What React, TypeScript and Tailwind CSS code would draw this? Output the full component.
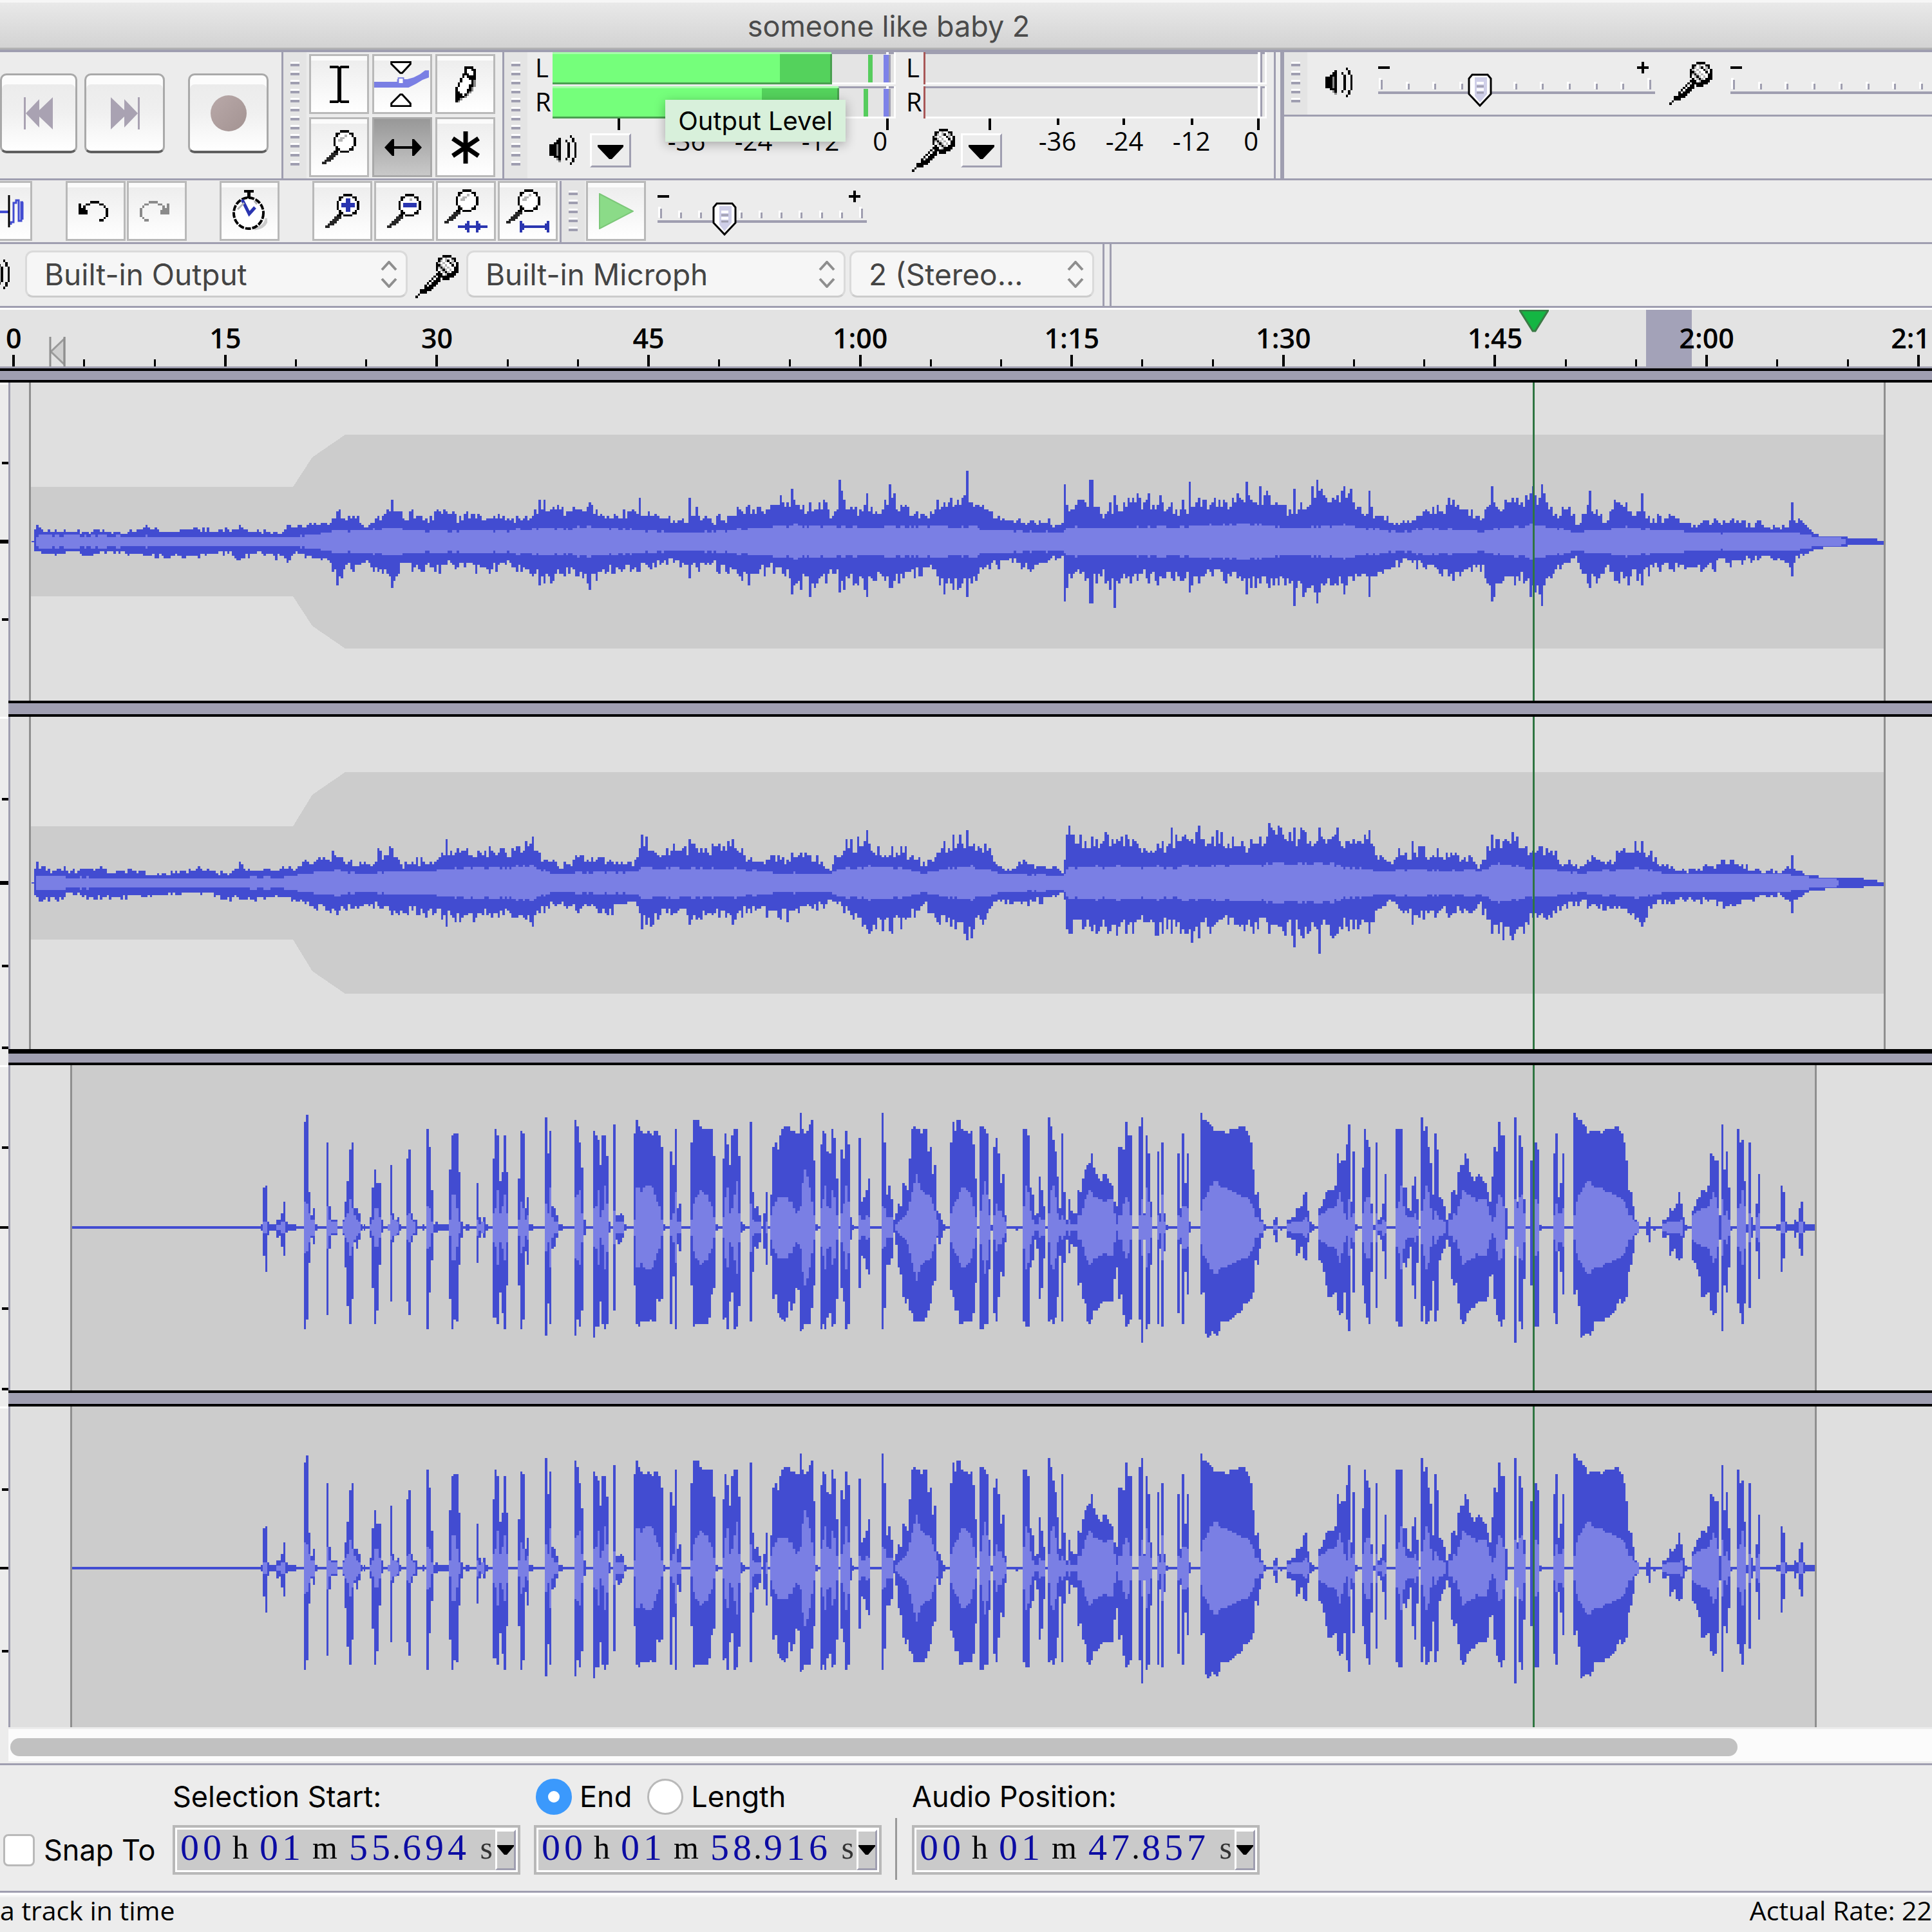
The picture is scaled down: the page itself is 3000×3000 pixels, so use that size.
import React from "react";

/* ---------- pixel icons ---------- */

const INK: Record<string, string> = {
  X: "#000000",
  w: "#ffffff",
  g: "#b5b5b5",
  b: "#2a35b0",
  k: "#262626",
  m: "#8a8a8a",
};

function PixelIcon({ rows, label }: { rows: string[]; label?: string }) {
  const cols = Math.max(...rows.map((r) => r.length));
  const paths: Record<string, string> = {};
  rows.forEach((row, y) => {
    for (let x = 0; x < row.length; x++) {
      const c = row[x];
      if (INK[c]) paths[c] = (paths[c] || "") + `M${x} ${y}h1v1h-1z`;
    }
  });
  return (
    <svg
      width={Math.round(cols * 3.53)}
      height={Math.round(rows.length * 3.53)}
      viewBox={`0 0 ${cols} ${rows.length}`}
      shapeRendering="crispEdges"
      aria-label={label}
      aria-hidden={label ? undefined : true}
      className="shrink-0"
    >
      {Object.entries(paths).map(([c, d]) => (
        <path key={c} d={d} fill={INK[c]} />
      ))}
    </svg>
  );
}

const LENS_HANDLE = [
  "......XXwwwwXX.",
  ".....XX.XXXX...",
  "....kkk........",
  "...kkk.........",
  "..kkk..........",
  ".kkk...........",
  "kk.............",
];
const LENS = [
  "........XXXX...",
  "......XXwwwwXX.",
  "......XwwwgwwX.",
  ".....XwwggwwwwX",
  ".....XwggwwwwwX",
  ".....XwwwwwwwwX",
  ".....XwwwwwwwwX",
  "......XwwwwwwX.",
  ...LENS_HANDLE,
];
const LENS_PLUS = [
  "........XXXX...",
  "......XXwwwwXX.",
  "......XwwbbwwX.",
  ".....XwwwbbwwwX",
  ".....XwbbbbbbwX",
  ".....XwbbbbbbwX",
  ".....XwwwbbwwwX",
  "......XwwbbwwX.",
  ...LENS_HANDLE,
];
const LENS_MINUS = [
  "........XXXX...",
  "......XXwwwwXX.",
  "......XwwwgwwX.",
  ".....XwwwwwwwwX",
  ".....XwbbbbbbwX",
  ".....XwbbbbbbwX",
  ".....XwwwwwwwwX",
  "......XwwwwwwX.",
  ...LENS_HANDLE,
];
const FIT_SELECTION = [
  ...LENS.slice(0, 14),
  "kk........b...b....",
  ".........bb...bb...",
  "......bbbbbbbbbbbbb",
  ".........bb...bb...",
  "..........b...b....",
];
const FIT_PROJECT = [
  ...LENS.slice(0, 14),
  "kk....b...........b",
  "......bb.........bb",
  "......bbbbbbbbbbbbb",
  "......bb.........bb",
  "......b...........b",
];
const PENCIL = [
  "....XXXX.",
  "....XwwXX",
  "....XwwwX",
  "...XXXwwX",
  "...XwXXXX",
  "..XwwwXXX",
  "..XwwwwXm",
  ".XwwwwwXm",
  ".XwwwwXXm",
  "XwwwwwXm.",
  "XwwwwXXm.",
  "XXwwwXm..",
  "XXXwXm...",
  "XXXXm....",
  "XXm......",
  "Xm.......",
];
const MIC = [
  "............XXXX...",
  "..........XXwgwwXX.",
  "..........XgwgXwgX.",
  ".........XgwgwwXgwX",
  ".........XXgwgwwXwX",
  ".........XgXgwgwwXX",
  ".........XwgXgwgwXX",
  "..........XwgXgwXXX",
  ".........XXXwgXXXX.",
  "........XwXXXXXXX..",
  ".......XwXX.XXX....",
  "......XwXXX........",
  ".....XwXXX.........",
  "....XwXXX..........",
  "....XXXX...........",
  "..XXXXX............",
  "..XXX..............",
  ".X.................",
  "X..................",
];
const SPEAKER = [
  ".........X..",
  "....X.....X.",
  "...XX..X..X.",
  "..XXX...X..X",
  "XXXmX...X..X",
  "XXXmX...X..X",
  "XXXmX...X..X",
  "XXXmX...X..X",
  "XXXmX...X..X",
  "..XXX...X..X",
  "...mX..X..X.",
  "....m.....X.",
  ".........X..",
];
const UNDO_GLYPH = [
  ".....XXXX....",
  "X..XX....XX..",
  "X.X........X.",
  "XXX.........X",
  "XXXX........X",
  "XXXX........X",
  "............X",
  "...........X.",
  ".........XX..",
];
const UNDO = UNDO_GLYPH.map((r) => r + "..");
const REDO = UNDO_GLYPH.map((r) => r.split("").reverse().join("").replace(/X/g, "m") + "..");

/* ---------- small drawn icons ---------- */

function CaretDown() {
  return (
    <svg width="40" height="22" viewBox="0 0 40 22" aria-hidden="true">
      <path d="M0 0H40V3L22 22H18L0 3Z" fill="#000" />
    </svg>
  );
}

function TransportIcon({ kind }: { kind: "prev" | "next" | "record" }) {
  if (kind === "record")
    return (
      <svg width="56" height="56" viewBox="0 0 56 56" aria-hidden="true">
        <defs>
          <linearGradient id="rec" x1="0" y1="0" x2="1" y2="1">
            <stop offset="0" stopColor="#b9a9a9" />
            <stop offset="1" stopColor="#a39392" />
          </linearGradient>
        </defs>
        <circle cx="28" cy="28" r="28" fill="url(#rec)" />
      </svg>
    );
  return (
    <svg width="46" height="50" viewBox="0 0 46 50" aria-hidden="true">
      <path
        d={
          kind === "prev"
            ? "M0 0H3V50H0Z M3 25 24 3V20L45 0V50L24 30V47Z"
            : "M46 0H43V50H46Z M43 25 22 3V20L1 0V50L22 30V47Z"
        }
        fill="#a9a2b2"
      />
    </svg>
  );
}

function IBeam() {
  return (
    <svg width="30" height="58" viewBox="0 0 30 58" aria-hidden="true">
      <path d="M0 0H13L15 2 17 0H30V4H18V54H30V58H17L15 56 13 58H0V54H12V4H0Z" fill="#000" />
    </svg>
  );
}

function EnvelopeIcon() {
  return (
    <svg width="88" height="76" viewBox="0 0 88 76" aria-hidden="true">
      <path d="M0 34H36V30H52L62 27 72 22 80 16H86V27L76 31 66 37 54 43H0Z" fill="#7a7fe4" />
      <path d="M27 3H57V6L44 20H41L27 6Z" fill="#fff" stroke="#000" strokeWidth="3" />
      <path d="M27 72H57V68L44 54H41L27 68Z" fill="#fff" stroke="#000" strokeWidth="3" />
      <rect x="38" y="28" width="8" height="9" fill="#fff" stroke="#7a7fe4" strokeWidth="2" />
    </svg>
  );
}

function TimeShiftIcon() {
  return (
    <svg width="60" height="26" viewBox="-2 0 60 26" aria-hidden="true">
      <path d="M0 13 12 0H15V11H43V0H46L58 13 46 26H43V15H15V26H12Z" fill="#000" />
    </svg>
  );
}

function MultiIcon() {
  return (
    <svg width="46" height="50" viewBox="0 0 46 50" aria-hidden="true">
      <path d="M23 0V50M3 11 43 38M43 11 3 38" stroke="#000" strokeWidth="7" fill="none" />
    </svg>
  );
}

function WaveIcon() {
  return (
    <svg width="38" height="50" viewBox="0 0 38 50" aria-hidden="true">
      <path d="M0 26H13" stroke="#424cd1" strokeWidth="4" />
      <path d="M17 46V42H21V12H25V8H29V40H33V11H36" stroke="#424cd1" strokeWidth="3" fill="none" />
      <path d="M14 0V50" stroke="#000" strokeWidth="3" />
      <path d="M35 11V38" stroke="#424cd1" strokeWidth="3" />
    </svg>
  );
}

function StopwatchIcon() {
  return (
    <svg width="54" height="66" viewBox="0 0 54 66" aria-hidden="true">
      <path d="M34 60Q52 58 53 44" stroke="#cccccc" strokeWidth="5" fill="none" />
      <ellipse cx="25" cy="36" rx="23" ry="24" fill="#fff" stroke="#000" strokeWidth="4" strokeDasharray="9 2" />
      <path d="M18 0H33V4H28V13H23V4H18Z" fill="#000" />
      <path d="M15 15 26 37 35 27" stroke="#2a35b0" strokeWidth="5" fill="none" />
      <path d="M8 30 18 20M34 17 38 22" stroke="#b5b5b5" strokeWidth="3" />
    </svg>
  );
}

function PlayIcon() {
  return (
    <svg width="54" height="56" viewBox="0 0 54 56" aria-hidden="true">
      <path d="M1 1 53 28 1 55Z" fill="#8bdb88" stroke="#7cc779" strokeWidth="2" />
    </svg>
  );
}

/* ---------- toolbar parts ---------- */

function Gripper({ bars }: { bars: number }) {
  return (
    <div className="flex w-[36px] shrink-0 flex-col items-center gap-[7px] self-stretch bg-[#e4e4e4] pt-[15px]">
      {Array.from({ length: bars }, (_, i) => (
        <div key={i} className="h-[7px] w-[14px] border-t-[3px] border-white bg-[#9f9eb0]" />
      ))}
    </div>
  );
}

function ToolButton({
  label,
  pressed,
  narrow,
  children,
}: {
  label: string;
  pressed?: boolean;
  narrow?: boolean;
  children: React.ReactNode;
}) {
  const tone = pressed
    ? "border-[#a9a9a9] bg-linear-to-b from-[#989898] to-[#c9c9c9]"
    : "border-[#b9b9b9] bg-linear-to-b from-[#ececec] to-white shadow-[inset_0_7px_0_#fbfbfb]";
  return (
    <button
      type="button"
      aria-label={label}
      aria-pressed={pressed}
      className={`flex h-[93px] shrink-0 items-center justify-center overflow-hidden border-[3px] ${
        narrow ? "w-[50px] justify-start border-l-0" : "w-[93px]"
      } ${tone}`}
    >
      {children}
    </button>
  );
}

function TransportButton({
  label,
  flush,
  children,
}: {
  label: string;
  flush?: boolean;
  children: React.ReactNode;
}) {
  return (
    <button
      type="button"
      aria-label={label}
      className={`flex h-[124px] shrink-0 items-center justify-center rounded-[10px] border-[3px] border-b-[4px] border-[#a9a9a9] border-b-[#5f5f5f] bg-linear-to-b from-[#eaeaea] via-[#f0f0f0] to-white shadow-[inset_0_14px_0_#fcfcfc] ${
        flush ? "w-[120px]" : "w-[125px]"
      }`}
    >
      {children}
    </button>
  );
}

function Slider({ label, width, value }: { label: string; width: number; value: number }) {
  const first = 5;
  const last = width - 8;
  const thumb = first + (last - first) * value;
  return (
    <div className="relative shrink-0">
      <svg width={width} height="72" viewBox={`0 0 ${width} 72`} aria-hidden="true" shapeRendering="crispEdges">
        <path d={`M0 9H18M${width - 28} 9H${width - 10}M${width - 19} 0V18`} stroke="#000" strokeWidth="4" />
        {Array.from({ length: 11 }, (_, i) => {
          const x = Math.round(first + ((last - first) * i) / 10);
          const top = i === 0 || i === 10 ? 28 : 34;
          return (
            <g key={i}>
              <rect x={x - 4} y={top - 3} width="4" height={45 - top} fill="#fff" />
              <rect x={x - 1} y={top} width="3" height={43 - top} fill="#9f9eb0" />
            </g>
          );
        })}
        <rect x="0" y="46" width={width} height="4" fill="#9f9eb0" />
        <g transform={`translate(${Math.round(thumb - 20)} 18)`} shapeRendering="auto">
          <path d="M7 2H31L36 8V32L19 50 2 32V8Z" fill="#fff" stroke="#000" strokeWidth="3" />
          <path d="M11 6H30V32L19 45 11 35Z" fill="#cfcfe8" />
          <path d="M14 15H25M14 25H25" stroke="#fff" strokeWidth="4" />
          <path d="M14 20H25M14 30H25" stroke="#9f9eb0" strokeWidth="3" />
        </g>
      </svg>
      <input
        type="range"
        aria-label={label}
        min={0}
        max={100}
        defaultValue={Math.round(value * 100)}
        className="absolute inset-0 h-full w-full cursor-pointer opacity-0"
      />
    </div>
  );
}

type Level = { light: number; dark: number; peak: number };

function MeterBar({ name, level }: { name: string; level?: Level }) {
  return (
    <div className="flex h-[50px]">
      <span className="w-[27px] text-[40px] leading-[48px]">{name}</span>
      <svg width="533" height="50" viewBox="0 0 533 50" shapeRendering="crispEdges" role="img" aria-label={`Channel ${name}`}>
        <rect width="533" height="50" fill="#fdfdfd" />
        <rect width="530" height="47" fill="#e4e4e4" />
        <rect width="530" height="3" fill="#9f9eb0" />
        {level ? (
          <>
            <rect width={level.dark} height="50" fill="#54d25c" />
            <rect width={level.light} height="50" fill="#75ff7b" />
            <rect width={level.dark} height="3" fill="#a6ffaa" />
            <rect y="47" width={level.dark} height="3" fill="#4a9f50" />
            <rect x={level.dark - 2} y="3" width="3" height="47" fill="#4a9f50" />
            <rect x={level.peak} y="4" width="7" height="43" fill="#56cc5d" />
            <rect x="514" y="4" width="8" height="43" fill="#7d82e8" />
            <rect x="522" y="4" width="3" height="43" fill="#9f9eb0" />
            <rect x="518" width="4" height="4" fill="#fff" />
          </>
        ) : (
          <>
            <rect x="519" width="4" height="50" fill="#fff" />
            <rect x="523" y="3" width="3" height="44" fill="#9f9eb0" />
            <rect width="3" height="50" fill="#a85757" />
          </>
        )}
      </svg>
    </div>
  );
}

function Meter({ name, icon, left, right }: { name: string; icon: string[]; left?: Level; right?: Level }) {
  return (
    <div className="flex w-[560px] shrink-0 flex-col">
      <MeterBar name="L" level={left} />
      <div className="h-[3px]" />
      <MeterBar name="R" level={right} />
      <svg width="533" height="18" viewBox="0 0 533 18" className="ml-[27px]" aria-hidden="true" shapeRendering="crispEdges">
        <path d="M103 0V18M520 0V18M209 0V10M311 0V10M417 0V10" stroke="#000" strokeWidth="4" />
      </svg>
      <div className="flex">
        <div className="flex h-[62px] w-[85px] items-center justify-center">
          <PixelIcon rows={icon} />
        </div>
        <button
          type="button"
          aria-label={`${name} options`}
          className="mt-[5px] flex h-[53px] w-[64px] items-center justify-center border-[3px] border-t-white border-r-[#9f9eb0] border-b-[#9f9eb0] border-l-white bg-[#ececec] pt-1"
        >
          <CaretDown />
        </button>
        <div className="ml-[34px] flex text-[40px] leading-[34px]">
          <span className="w-[104px] text-center">-36</span>
          <span className="w-[104px] text-center">-24</span>
          <span className="w-[104px] text-center">-12</span>
          <span className="w-[52px] text-right">0</span>
        </div>
      </div>
    </div>
  );
}

function DeviceSelect({ label, value, size }: { label: string; value: string; size: string }) {
  return (
    <div className={`relative shrink-0 ${size}`}>
      <select
        aria-label={label}
        defaultValue={value}
        className="h-[73px] w-full appearance-none rounded-[12px] border-[3px] border-[#dadada] border-b-[#cccccc] bg-[#f6f6f6] pl-[27px] font-[Inter,sans-serif] text-[46px] leading-[60px] text-[#444444]"
      >
        <option>{value}</option>
      </select>
      <svg width="26" height="42" viewBox="0 0 26 42" className="pointer-events-none absolute top-[16px] right-[16px]" aria-hidden="true">
        <path d="M2 14 13 2 24 14M2 28 13 40 24 28" stroke="#8e8e8e" strokeWidth="4" fill="none" />
      </svg>
    </div>
  );
}

/* ---------- waveforms ---------- */

/* Music envelopes: pairs of position and height on the timeline grid. */
const MUSIC_SCALE_X = 1.0453;
const MUSIC_SCALE_Y = 1.96;

const MUSIC_L = {
  up: [52,12,57,62,70,38,100,38,200,30,235,50,260,35,310,45,350,32,388,48,410,32,460,32,466,55,500,50,530,65,550,90,575,105,590,55,610,75,635,120,655,90,680,90,700,70,712,105,740,80,790,85,850,75,872,115,905,115,955,115,985,90,1010,95,1040,115,1060,90,1117,70,1120,115,1150,75,1185,90,1230,115,1283,145,1310,110,1335,120,1350,85,1363,150,1390,110,1405,140,1430,110,1444,150,1480,95,1500,85,1525,130,1545,150,1567,165,1572,140,1600,110,1640,70,1660,65,1700,65,1726,55,1728,160,1735,125,1769,150,1790,100,1808,120,1850,150,1890,115,1930,130,1970,125,2000,135,2020,160,2060,150,2090,120,2118,110,2136,180,2160,145,2190,160,2210,110,2240,90,2265,60,2290,75,2320,110,2365,130,2400,75,2415,140,2440,110,2455,145,2480,160,2500,160,2520,100,2550,100,2560,60,2578,130,2600,75,2625,140,2650,110,2680,85,2720,75,2740,55,2815,75,2860,55,2900,50,2906,90,2930,45,2950,15,2990,13,3000,9,3044,9,3046,3,3057,3],
  down: [52,8,57,45,120,32,140,55,170,35,245,50,300,52,370,35,388,60,410,35,466,60,480,42,530,62,547,110,560,100,600,80,635,125,650,80,700,95,760,75,790,105,830,75,873,125,920,110,957,125,1000,95,1050,85,1090,60,1120,100,1150,80,1215,125,1260,85,1283,150,1330,140,1350,100,1365,150,1405,155,1430,120,1445,135,1490,110,1500,80,1530,145,1567,165,1590,100,1640,60,1670,100,1700,65,1726,50,1728,150,1750,100,1770,160,1785,115,1808,150,1830,130,1890,125,1935,130,1960,105,2030,150,2060,130,2098,160,2135,160,2180,150,2220,130,2260,90,2280,55,2320,95,2360,125,2400,80,2420,160,2440,120,2480,150,2498,185,2520,110,2555,60,2582,130,2610,90,2625,140,2660,115,2700,80,2760,85,2830,65,2870,55,2905,85,2915,50,2950,18,2990,13,3000,9,3044,9,3046,5,3057,5],
  rms: [57,20,460,14,500,20,550,35,630,42,700,32,800,35,955,45,1050,35,1100,28,1180,35,1283,50,1400,45,1567,50,1600,35,1726,28,1728,45,1800,42,2030,55,2100,42,2180,52,2270,28,2320,42,2400,32,2490,52,2560,30,2640,45,2750,28,2900,28,2930,22,2945,12,2994,10,2996,0,3057,0],
  spikes: [1363,186,151,1444,172,140,1567,214,165,1728,172,180,1769,186,186,1809,138,200,1931,180,155,2020,180,160,2098,160,192,2135,186,186,2220,152,165,2419,166,180,2500,172,192,2578,150,138,2662,145,130,2906,117,102,1283,158,158,635,124,138,547,90,131,1405,145,165,957,120,144,1312,115,165,1038,131,90,1118,131,110,873,124,131],
};
const MUSIC_R = {
  up: [52,8,57,70,75,40,165,48,180,35,210,50,240,25,320,45,370,30,388,65,400,40,430,45,475,50,500,75,543,100,560,70,600,65,612,105,635,105,650,60,670,80,700,80,724,125,760,95,790,110,850,110,864,135,880,90,910,60,955,90,985,80,1030,65,1040,140,1060,110,1120,120,1190,125,1220,80,1260,85,1310,100,1345,50,1363,120,1404,145,1420,110,1465,110,1500,60,1530,120,1555,150,1585,125,1600,110,1620,60,1640,45,1665,75,1700,50,1726,45,1728,150,1740,155,1760,130,1800,150,1840,150,1870,110,1900,160,1945,160,1980,155,2020,130,2060,165,2100,165,2140,165,2170,155,2220,150,2240,80,2290,110,2350,110,2400,60,2420,140,2455,150,2490,125,2510,115,2530,75,2560,60,2590,90,2610,65,2625,120,2663,120,2690,65,2720,40,2750,45,2795,75,2850,45,2890,35,2906,60,2930,20,2980,13,3044,9,3046,3,3057,3],
  down: [52,8,57,50,70,65,110,40,175,55,245,45,280,35,350,40,388,60,440,50,480,60,540,100,600,80,640,95,660,100,724,120,800,110,864,125,900,70,980,100,1030,65,1040,140,1080,110,1165,120,1230,90,1270,120,1320,90,1350,60,1400,135,1445,150,1500,80,1530,125,1565,165,1585,140,1620,60,1665,70,1726,35,1728,150,1860,145,1930,165,2000,140,2060,150,2140,180,2150,160,2220,155,2250,60,2300,120,2360,110,2400,70,2425,160,2460,165,2520,95,2560,70,2620,90,2663,130,2690,60,2750,60,2800,75,2850,50,2890,40,2906,75,2930,25,2980,13,3044,9,3046,5,3057,5],
  rms: [57,20,240,14,460,18,500,30,543,40,600,30,724,45,864,50,900,30,1030,35,1040,48,1190,45,1260,32,1340,30,1363,45,1444,52,1500,30,1567,55,1620,30,1726,22,1728,50,1900,50,2136,65,2200,45,2240,35,2290,45,2400,35,2425,60,2500,45,2560,32,2663,48,2700,28,2900,28,2930,18,2980,10,2984,0,3057,0],
  spikes: [724,131,130,864,138,131,1040,145,138,1404,158,138,1567,160,172,1735,172,150,1901,166,150,1943,172,165,1932,130,180,2060,180,150,2139,165,215,2098,165,193,2168,165,150,2220,158,152,2290,124,124,2419,145,152,2453,152,172,2663,124,131,2906,82,90,1445,110,152,1118,131,124,1189,131,125,612,103,70,635,103,96],
};
type Music = typeof MUSIC_L;

function sampleAt(knots: number[], x: number) {
  for (let i = 0; i + 3 < knots.length; i += 2) {
    if (x <= knots[i + 2]) {
      const t = (x - knots[i]) / (knots[i + 2] - knots[i]);
      return t < 0 ? 0 : knots[i + 1] + t * (knots[i + 3] - knots[i + 1]);
    }
  }
  return 0;
}

const CELL = 3000 / 850;

function musicPaths(data: Music, mid: number, seed: number) {
  let s = seed;
  const rand = () => {
    s = (s * 1664525 + 1013904223) % 4294967296;
    return s / 4294967296;
  };
  const snap = (v: number) => Math.round(Math.round(v / MUSIC_SCALE_Y / CELL) * CELL);
  let peaks = "";
  let rms = "";
  let lean = 0.5;
  for (let c = 14; c < 829; c++) {
    const x = c * CELL * MUSIC_SCALE_X;
    lean = lean * 0.4 + rand() * 0.6;
    const tail = x > 2925;
    const jitter = () => (tail ? 1 : 0.6 + 0.26 * lean + 0.3 * Math.pow(rand(), 1.8));
    let up = sampleAt(data.up, x) * jitter();
    let down = sampleAt(data.down, x) * jitter();
    for (let i = 0; i < data.spikes.length; i += 3) {
      if (Math.abs(data.spikes[i] - x) < 1.9) {
        up = data.spikes[i + 1];
        down = data.spikes[i + 2];
      }
    }
    const inner = Math.min(sampleAt(data.rms, x) * (tail ? 1 : 0.82 + 0.28 * lean), up, down);
    const from = Math.round(c * CELL);
    const to = Math.round((c + 1) * CELL);
    peaks += `M${from} ${mid - snap(up) - 1}H${to}V${mid + snap(down) + 1}H${from}Z`;
    if (inner > 3) {
      const r = snap(inner);
      rms += `M${from} ${mid - r}H${to}V${mid + r}H${from}Z`;
    }
  }
  return { peaks, rms };
}

/* Voice clip: each part lists x, top, bottom for the peaks and x, top for the RMS body. */
const VOICE_MID = 745;
const VOICE_SCALE_Y = 2.8;
const VOICE = [
  {
    origin: 380,
    scale: 1.7422,
    peaks: [-468,740,750,43,730,760,49,572,868,55,563,938,61,720,778,67,730,760,85,710,790,92,710,780,98,682,830,104,632,868,110,720,768,116,730,760,140,740,750,160,287,1186,166,256,1145,172,592,898,178,692,790,184,662,818,190,730,760,196,740,750,221,375,1127,227,652,838,233,710,778,251,740,750,264,710,778,270,632,918,276,543,1086,283,405,1165,289,375,1056,295,662,808,301,662,838,307,682,798,313,730,760,319,740,750,322,730,760,326,740,750,338,700,790,344,572,1007,350,494,1165,356,552,1106,362,552,908,369,710,768,375,740,750,387,730,760,393,474,1068,399,682,808,405,710,778,413,700,778,418,730,760,424,740,750,437,444,1068,443,405,1127,449,682,808,455,710,778,467,740,750,480,730,760,486,740,750,492,316,1186,498,395,1027,504,582,888,510,730,768,516,720,768,522,730,760,553,494,1056,559,345,1186,565,335,1145,571,335,1155,578,504,908,584,720,790,590,740,750,598,730,760,608,740,750,627,552,898,633,700,790,639,720,768,645,700,790,652,730,760,658,740,750,670,444,1137,676,316,1137,682,345,1165,689,543,1027,695,504,1117,701,345,1186,707,504,997,713,740,750,739,533,997,745,325,1186,751,335,1145,757,662,848,763,612,908,769,730,760,781,740,750,812,266,1216,818,424,1076,824,325,1165,830,652,838,836,662,828,842,692,790,848,730,760,861,740,750,892,276,1216,898,306,1145,904,375,1175,910,484,1106,917,710,778,923,740,750,942,325,1225,948,345,1175,954,365,1175,960,474,1068,966,345,1165,973,345,1186,978,434,1165,984,720,768,990,740,750,997,296,1106,1003,692,798,1009,692,818,1015,682,808,1021,692,790,1027,730,760,1033,740,750,1052,335,997,1058,276,1165,1064,306,1175,1070,325,1155,1077,335,1155,1089,325,1155,1095,335,1145,1101,345,1155,1107,325,1155,1113,325,1056,1119,345,1068,1125,395,1056,1132,730,760,1138,740,750,1150,414,1165,1156,474,958,1163,316,1186,1169,662,818,1175,642,848,1181,740,750,1206,375,997,1212,276,1175,1218,276,1165,1230,306,1165,1237,316,1165,1255,316,1137,1261,316,1037,1267,434,1007,1274,730,760,1280,740,750,1292,444,1145,1298,335,1137,1304,385,1186,1310,474,1068,1316,345,1027,1323,316,1186,1329,316,1175,1335,434,1086,1341,720,768,1347,730,760,1353,740,750,1366,287,1155,1372,592,938,1378,662,828,1384,652,838,1390,692,808,1397,740,750,1403,682,838,1409,592,908,1415,740,750,1421,602,868,1427,395,1056,1434,375,1037,1440,405,1117,1446,345,1137,1452,316,1145,1458,306,1155,1464,306,1137,1470,306,1068,1476,325,1106,1483,325,1076,1489,335,1007,1495,335,1017,1501,246,1196,1507,316,1186,1513,335,1165,1519,325,1165,1526,296,1165,1532,276,1096,1538,454,997,1544,730,760,1550,740,750,1557,385,1186,1563,325,1165,1568,0,0],
    body: [49,720,61,745,85,735,98,720,110,745,160,632,166,642,172,682,178,710,190,745,221,652,227,710,233,720,251,745,264,720,270,700,276,682,283,622,289,662,295,692,301,710,307,720,313,745,338,730,344,710,350,662,362,700,369,745,387,730,393,692,399,710,411,720,417,745,437,692,443,682,449,710,455,720,462,745,492,652,498,662,504,720,510,745,553,710,559,602,571,662,578,720,584,745,627,710,633,730,639,720,648,745,670,682,676,662,682,582,689,682,695,652,701,602,707,682,713,745,739,710,745,632,751,662,757,710,763,692,769,745,812,642,818,682,824,572,830,700,836,720,848,745,892,612,898,602,904,582,910,682,917,745,942,662,948,652,954,582,960,700,966,670,973,563,978,640,984,745,997,672,1003,720,1027,745,1052,710,1058,572,1070,592,1077,572,1083,563,1101,572,1107,602,1113,632,1119,652,1125,710,1132,745,1150,710,1156,682,1163,592,1169,720,1181,745,1206,710,1212,642,1218,612,1224,602,1230,582,1237,592,1243,602,1255,632,1261,652,1267,700,1274,745,1292,700,1298,612,1304,572,1310,682,1316,662,1323,602,1329,543,1335,682,1341,745,1366,640,1372,710,1378,720,1397,745,1409,720,1415,745,1421,692,1427,652,1434,632,1440,612,1470,632,1483,662,1489,682,1495,672,1501,652,1507,552,1513,494,1519,523,1526,572,1532,632,1538,692,1544,745,1557,662,1563,622,1568,745],
  },
  {
    origin: 1280,
    scale: 1.7422,
    peaks: [0,335,1186,6,414,1137,12,424,1117,19,316,1175,25,355,1165,32,533,1056,38,740,750,44,405,1007,50,444,1068,56,325,1186,62,385,1165,69,700,798,75,733,755,81,740,750,93,355,1007,99,632,868,105,612,878,111,582,928,118,533,948,124,740,750,155,246,1186,161,375,1096,167,602,908,173,563,908,180,622,878,186,710,768,192,682,820,198,642,918,204,652,948,211,552,1047,217,563,1076,223,582,1056,229,444,1106,235,316,1117,241,306,1155,247,316,1155,260,335,1155,266,316,1155,272,316,1137,278,414,1106,285,395,1076,291,513,997,297,474,978,303,672,790,309,682,818,315,710,790,321,730,760,327,740,750,340,375,1017,346,287,1047,352,325,1106,358,276,1106,364,276,1165,370,316,1165,377,325,1155,389,335,1155,395,325,1155,401,385,1117,407,533,987,413,740,750,419,306,1186,432,316,1165,438,335,1165,444,622,928,450,733,760,457,395,1117,463,355,1155,469,424,1047,475,552,938,481,513,958,487,692,808,493,740,750,518,740,760,524,740,750,537,316,1155,543,316,1175,549,345,1175,555,572,918,561,602,888,568,692,798,574,682,838,580,523,1056,586,582,1007,592,652,878,598,740,750,605,266,1155,611,306,1145,617,365,1165,623,414,1137,629,523,1047,635,662,868,641,335,1155,647,592,898,654,710,798,660,622,858,666,672,818,672,682,828,684,582,997,690,592,987,697,533,1056,703,494,1076,709,474,1155,715,464,1165,721,424,1145,727,484,1106,734,513,1106,740,533,1096,746,543,1076,752,513,1068,764,533,1068,770,552,1068,777,563,1068,783,632,968,789,652,918,795,395,1056,801,395,1037,807,405,1127,814,287,1175,820,345,1165,826,345,1145,832,740,750,851,306,1145,857,266,1245,863,682,790,869,345,1186,875,424,1165,881,632,908,887,740,750,900,414,1165,906,682,838,912,375,1175,918,682,848,924,733,755,930,740,750,955,424,1117,961,662,818,967,335,1165,974,552,938,980,424,1037,986,720,768,992,740,750,1017,246,1037,1023,276,1027,1029,276,1206,1035,287,1225,1041,296,1216,1047,306,1196,1053,325,1206,1060,325,1216,1066,325,1196,1072,325,1155,1084,335,1155,1096,316,1145,1103,316,1137,1109,316,1127,1115,316,1117,1121,306,1117,1127,306,1106,1133,306,1076,1139,325,1076,1146,345,1068,1152,375,1056,1158,494,1027,1164,602,888,1170,592,908,1176,662,838,1182,710,790,1189,730,760,1195,740,750,1214,710,778,1220,700,808,1226,740,750,1233,740,760,1239,740,750,1251,710,790,1263,700,798,1275,662,868,1281,662,858,1287,652,830,1294,602,878,1300,592,888,1306,672,808,1312,720,768,1318,730,760,1325,740,750,1337,662,888,1343,652,898,1349,622,938,1355,592,997,1361,582,1047,1374,582,1037,1380,563,1027,1386,424,1106,1392,464,1127,1398,454,1117,1404,454,1027,1411,385,1145,1417,296,1196,1423,632,838,1429,414,1027,1435,730,760,1442,740,750,1454,484,997,1460,316,1076,1466,365,1137,1472,395,1165,1478,642,938,1485,733,755,1491,375,1096,1497,710,778,1503,700,798,1509,642,848,1515,513,968,1521,740,750,1546,0,0],
    body: [0,563,6,652,12,662,19,582,25,612,32,692,38,745,44,682,50,642,56,563,62,632,69,745,93,692,99,710,111,692,118,700,124,745,155,652,161,662,167,700,186,745,192,730,198,720,204,710,211,700,217,692,223,672,229,632,235,592,241,552,247,513,253,552,260,582,266,592,272,602,285,612,291,642,297,672,303,710,309,745,340,682,346,652,352,632,358,622,364,592,370,572,383,582,389,592,395,612,401,652,407,700,413,745,419,672,426,602,432,543,438,602,444,692,450,745,457,692,463,642,469,672,481,700,487,720,493,745,537,652,543,563,549,592,555,672,561,710,568,730,580,700,586,710,598,745,605,682,611,582,617,563,623,612,629,682,635,710,641,692,647,710,654,730,660,710,666,730,684,692,697,662,703,622,709,602,715,582,721,592,727,612,740,622,752,632,764,622,783,682,789,730,795,692,807,642,814,612,820,632,826,692,832,745,851,692,857,622,863,692,869,572,875,632,881,700,887,745,900,692,906,720,912,602,918,720,924,745,955,692,961,700,967,652,980,662,986,745,1017,672,1023,622,1029,612,1035,592,1041,563,1053,543,1066,563,1072,572,1090,582,1103,592,1115,602,1127,612,1146,622,1152,642,1158,662,1164,700,1176,720,1189,745,1214,735,1226,745,1251,728,1263,720,1294,710,1300,700,1306,720,1312,745,1337,692,1343,682,1355,672,1361,662,1380,652,1386,622,1392,592,1398,632,1404,682,1411,710,1417,622,1423,700,1429,682,1435,745,1454,682,1460,632,1466,612,1478,682,1485,745,1491,682,1497,730,1509,710,1515,720,1521,745],
  },
  {
    origin: 2080,
    scale: 1.7043,
    peaks: [149,316,1155,155,316,1175,167,572,898,173,572,918,179,662,878,185,672,828,191,563,997,197,523,1056,203,622,898,209,740,750,215,266,1155,221,325,1086,227,306,1165,233,395,1155,239,464,1106,245,602,978,251,335,1155,257,405,1106,263,612,888,269,622,858,275,652,838,281,710,798,288,682,828,294,592,968,300,582,997,306,602,987,312,504,1076,318,474,1145,324,474,1165,330,424,1155,336,444,1117,342,504,1106,348,523,1096,354,543,1096,360,523,1076,366,513,1068,372,523,1068,378,543,1068,384,552,1068,390,592,1047,396,632,958,402,523,948,408,395,1056,414,414,1127,420,287,1155,426,345,1175,432,345,1145,438,662,798,444,740,750,462,266,1245,468,632,828,474,345,1155,480,395,1186,486,622,968,492,740,750,505,454,997,511,400,1100,517,375,1175,523,405,1175,529,733,760,535,740,750,565,424,1117,571,335,1165,577,612,848,583,552,938,589,424,1037,595,740,750,619,246,1037,625,266,1017,631,276,1086,637,276,1225,643,296,1216,649,306,1206,655,335,1206,661,325,1216,667,325,1196,673,325,1155,691,335,1155,697,325,1155,703,316,1137,715,316,1127,721,316,1117,727,306,1106,733,306,1076,739,325,1056,745,335,1076,751,375,1068,757,454,1047,763,582,938,769,592,908,775,652,858,781,710,778,787,720,768,793,740,750,812,720,778,818,700,808,824,740,750,830,740,760,836,740,750,854,710,790,866,700,778,872,662,868,878,672,848,884,662,838,890,642,878,896,592,888,902,642,878,908,700,790,914,733,760,920,740,750,932,672,888,938,652,898,944,622,928,950,612,958,956,582,1047,968,592,1037,974,563,1027,980,424,1106,986,434,1127,992,454,1117,998,454,1027,1004,692,798,1010,296,1196,1016,494,997,1022,414,1027,1028,572,918,1034,740,760,1040,740,750,1052,316,1076,1058,375,1117,1064,365,1165,1070,543,1076,1076,730,768,1083,375,1096,1089,700,790,1095,733,760,1101,642,848,1107,513,968,1113,740,750,1155,730,760,1167,563,938,1173,592,878,1179,720,768,1185,730,760,1203,710,790,1209,720,768,1215,662,838,1221,632,868,1227,720,768,1233,730,760,1257,0,0],
    body: [149,662,155,632,161,563,167,652,173,692,179,700,197,682,203,710,209,745,215,672,221,622,227,563,233,592,239,662,245,710,251,672,257,692,263,710,275,720,281,745,288,710,300,682,306,692,312,652,318,622,324,582,330,592,336,602,348,612,360,632,366,622,390,652,396,692,402,720,408,700,414,642,420,602,426,612,432,652,438,745,462,622,468,662,474,612,480,602,486,682,492,745,511,692,517,622,523,642,529,745,565,692,571,642,577,682,589,662,595,745,619,692,625,632,631,602,637,592,643,572,649,552,655,543,667,563,673,572,697,582,703,592,721,602,733,612,745,622,751,632,757,662,763,692,775,710,781,720,793,745,854,728,866,720,902,710,908,745,932,692,938,682,944,672,956,662,974,652,980,622,986,592,992,612,998,662,1004,745,1010,622,1016,692,1022,672,1028,710,1034,745,1052,662,1058,642,1064,582,1070,652,1076,745,1083,682,1089,745,1101,700,1107,682,1113,745,1167,720,1179,745,1215,720,1227,745],
  },
];

function voicePaths(mid: number) {
  let peaks = "";
  let rms = "";
  for (const part of VOICE) {
    const px = (x: number) => Math.round(part.origin + x / part.scale);
    const py = (y: number) => Math.round(mid + (y - VOICE_MID) / VOICE_SCALE_Y);
    for (let i = 0; i + 3 < part.peaks.length; i += 3) {
      const [x, top, bottom, next] = part.peaks.slice(i, i + 4);
      peaks += `M${px(x)} ${py(top)}H${px(next)}V${py(bottom)}H${px(x)}Z`;
    }
    for (let i = 0; i + 2 < part.body.length; i += 2) {
      const [x, top, next] = part.body.slice(i, i + 3);
      if (top < VOICE_MID) rms += `M${px(x)} ${py(top)}H${px(next)}V${py(2 * VOICE_MID - top)}H${px(x)}Z`;
    }
  }
  return { peaks, rms };
}

type ChannelProps = {
  label: string;
  height: number;
  mid: number;
  size: string;
  clip: [number, number];
  envelope: string;
  waves: { peaks: string; rms: string };
  ticks: number[];
  zero: number;
};

function Channel({ label, height, mid, size, clip, envelope, waves, ticks, zero }: ChannelProps) {
  return (
    <div className={`flex ${size}`}>
      <svg width="13" height="100%" viewBox={`0 0 13 ${height}`} preserveAspectRatio="none" className="shrink-0" aria-hidden="true" shapeRendering="crispEdges">
        <rect width="13" height="3" fill="#fff" />
        {ticks.map((y) => (
          <rect key={y} x="3" y={y - 2} width="10" height="4" fill="#000" />
        ))}
        <rect y={mid - zero / 2} width="13" height={zero} fill="#000" />
      </svg>
      <svg
        width="100%"
        height="100%"
        viewBox={`13 0 2987 ${height}`}
        preserveAspectRatio="none"
        className="min-w-0 flex-1 bg-[#dfdfdf]"
        role="img"
        aria-label={label}
        shapeRendering="crispEdges"
      >
        <rect x="13" width="3" height={height} fill="#9f9eb0" />
        <path d={envelope} fill="#cccccc" />
        <path d={waves.peaks} fill="#424cd1" />
        <path d={waves.rms} fill="#7a7fe4" />
        <rect x={clip[0] - 3} width="3" height={height} fill="#8f8f8f" />
        <rect x={clip[1]} width="3" height={height} fill="#8f8f8f" />
        <rect x="2380" width="3" height={height} fill="#2f7542" />
      </svg>
    </div>
  );
}

function Divider({ heavy }: { heavy?: boolean }) {
  return (
    <div
      className={`ml-[13px] h-[25px] shrink-0 border-b-[4px] border-black bg-[#a09fb1] ${
        heavy ? "border-t-[7px]" : "border-t-[4px]"
      }`}
    />
  );
}

const fadeEnvelope = (m: number, small: number, knee: number, full: number) =>
  `M48 ${m - small}H455L485 ${m - knee} 536 ${m - full}H2925V${m + full}H536L485 ${m + knee} 455 ${m + small}H48Z`;

/* ---------- selection bar ---------- */

function Digits({ value, name }: { value: string; name: string }) {
  return (
    <>
      {value.split("").map((d, i) =>
        d === "." ? (
          <span key={i} className="w-[13px] text-center">
            .
          </span>
        ) : (
          <input
            key={i}
            type="text"
            aria-label={`${name} digit ${i + 1}`}
            maxLength={1}
            defaultValue={d}
            className="h-[54px] w-[35px] bg-transparent p-0 text-center text-[58px] leading-[54px] text-[#0c0ca3]"
          />
        ),
      )}
    </>
  );
}

function TimeField({ label, seconds, minutes }: { label: string; seconds: string; minutes: string }) {
  return (
    <div
      role="group"
      aria-label={label}
      className="flex h-[77px] w-[540px] items-stretch border-[4px] border-[#b8b8b8] bg-white p-[3px]"
    >
      <div className="flex flex-1 items-start bg-[#cacaca] pl-[2px] font-['Liberation_Serif',serif] text-[50px] leading-[56px] text-black">
        <Digits value="00" name={`${label} hours`} />
        <span className="w-[53px] text-center">h</span>
        <Digits value={minutes} name={`${label} minutes`} />
        <span className="w-[69px] text-center">m</span>
        <Digits value={seconds} name={`${label} seconds`} />
        <span className="flex-1 pr-1 text-right text-[#333333]">s</span>
      </div>
      <button
        type="button"
        aria-label={`${label} format`}
        className="flex w-[32px] items-center justify-center border-[3px] border-t-white border-r-[#9f9eb0] border-b-[#9f9eb0] border-l-white bg-[#cacaca]"
      >
        <svg width="26" height="15" viewBox="0 0 26 15" aria-hidden="true" className="shrink-0">
          <path d="M0 0H26V2L15 15H11L0 2Z" fill="#000" />
        </svg>
      </button>
    </div>
  );
}

const RULER = ["0", "15", "30", "45", "1:00", "1:15", "1:30", "1:45", "2:00", "2:1"];

export default function App() {
  const musicL = musicPaths(MUSIC_L, 247, 11);
  const musicR = musicPaths(MUSIC_R, 258, 47);
  const voiceL = voicePaths(252);
  const voiceR = voicePaths(251);
  return (
    <main className="flex min-h-screen w-full flex-col overflow-hidden bg-[#ececec] font-['Open_Sans',sans-serif] text-black">
      <header className="flex h-[81px] shrink-0 items-center justify-center border-t-[4px] border-b-[4px] border-t-[#f6f6f6] border-b-[#9f9eb0] bg-linear-to-b from-[#e9e9e9] to-[#d2d2d2] pr-[240px] shadow-[inset_0_-3px_0_#b2b2b2]">
        <h1 className="font-[Inter,sans-serif] text-[45px] leading-[60px] text-[#4b4b4b]">someone like baby 2</h1>
      </header>

      <div className="flex h-[199px] shrink-0 border-b-[3px] border-[#9f9eb0]">
        <section aria-label="Transport" className="flex w-[440px] shrink-0 border-r-[3px] border-[#9f9eb0] pt-[33px]">
          <TransportButton label="Skip to start" flush>
            <TransportIcon kind="prev" />
          </TransportButton>
          <div className="w-[11px]" />
          <TransportButton label="Skip to end">
            <TransportIcon kind="next" />
          </TransportButton>
          <div className="w-[36px]" />
          <TransportButton label="Record">
            <TransportIcon kind="record" />
          </TransportButton>
        </section>

        <section aria-label="Tools" className="flex w-[343px] shrink-0 border-r-[3px] border-[#9f9eb0]">
          <Gripper bars={12} />
          <div className="ml-1 grid grid-cols-3 content-start gap-x-[5px] gap-y-[5px] pt-[3px]">
            <ToolButton label="Selection tool">
              <IBeam />
            </ToolButton>
            <ToolButton label="Envelope tool">
              <EnvelopeIcon />
            </ToolButton>
            <ToolButton label="Draw tool">
              <PixelIcon rows={PENCIL} />
            </ToolButton>
            <ToolButton label="Zoom tool">
              <PixelIcon rows={LENS} />
            </ToolButton>
            <ToolButton label="Time shift tool" pressed>
              <TimeShiftIcon />
            </ToolButton>
            <ToolButton label="Multi-tool">
              <MultiIcon />
            </ToolButton>
          </div>
        </section>

        <section aria-label="Meters" className="relative flex w-[1198px] shrink-0 border-r-[3px] border-[#9f9eb0]">
          <Gripper bars={12} />
          <div className="w-[12px] shrink-0" />
          <Meter
            name="Playback"
            icon={SPEAKER}
            left={{ light: 353, dark: 433, peak: 490 }}
            right={{ light: 325, dark: 444, peak: 483 }}
          />
          <div className="w-[16px] shrink-0" />
          <Meter name="Recording" icon={MIC} />
          <div
            role="tooltip"
            className="absolute top-[74px] left-[250px] flex h-[65px] w-[280px] items-center justify-center bg-[#d8f0db] font-[Inter,sans-serif] text-[40px] leading-[46px] shadow-[0_4px_16px_rgba(0,0,0,0.3)]"
          >
            Output Level
          </div>
        </section>

        <section aria-label="Mixer" className="ml-[7px] min-w-0 flex-1 border-l-[6px] border-[#9f9eb0]">
          <div className="flex h-[100px] items-start overflow-hidden border-b-[3px] border-[#9f9eb0]">
            <Gripper bars={5} />
            <div className="mt-[24px] ml-[28px]">
              <PixelIcon rows={SPEAKER} />
            </div>
            <div className="mt-[15px] ml-[40px] flex">
              <Slider label="Output volume" width={430} value={0.37} />
              <div className="mr-[28px] ml-[22px]">
                <PixelIcon rows={MIC} />
              </div>
              <Slider label="Input volume" width={430} value={0.9} />
            </div>
          </div>
        </section>
      </div>

      <div className="flex h-[99px] shrink-0 border-b-[3px] border-[#9f9eb0] pt-[1px]">
        <ToolButton label="Trim audio" narrow>
          <WaveIcon />
        </ToolButton>
        <div className="ml-[52px] flex gap-[2px]">
          <ToolButton label="Undo">
            <PixelIcon rows={UNDO} />
          </ToolButton>
          <ToolButton label="Redo">
            <PixelIcon rows={REDO} />
          </ToolButton>
        </div>
        <div className="mx-[51px]">
          <ToolButton label="Sync-lock tracks">
            <StopwatchIcon />
          </ToolButton>
        </div>
        <div className="flex gap-[3px] border-r-[3px] border-[#9f9eb0] pr-[3px]">
          <ToolButton label="Zoom in">
            <PixelIcon rows={LENS_PLUS} />
          </ToolButton>
          <ToolButton label="Zoom out">
            <PixelIcon rows={LENS_MINUS} />
          </ToolButton>
          <ToolButton label="Fit selection">
            <PixelIcon rows={FIT_SELECTION} />
          </ToolButton>
          <ToolButton label="Fit project">
            <PixelIcon rows={FIT_PROJECT} />
          </ToolButton>
        </div>
        <Gripper bars={5} />
        <div className="ml-[2px]">
          <ToolButton label="Play at speed">
            <PlayIcon />
          </ToolButton>
        </div>
        <div className="mt-[15px] ml-[18px]">
          <Slider label="Playback speed" width={325} value={0.32} />
        </div>
      </div>

      <section aria-label="Devices" className="flex h-[99px] shrink-0 items-center border-b-[3px] border-[#9f9eb0] pb-[3px]">
        <div className="flex w-[39px] shrink-0 justify-end overflow-hidden pr-[24px]">
          <PixelIcon rows={SPEAKER} />
        </div>
        <DeviceSelect label="Output device" value="Built-in Output" size="w-[594px]" />
        <div className="flex w-[91px] shrink-0 justify-center pt-[7px]">
          <PixelIcon rows={MIC} />
        </div>
        <DeviceSelect label="Input device" value="Built-in Microph" size="w-[589px]" />
        <div className="w-[6px] shrink-0" />
        <DeviceSelect label="Input channels" value="2 (Stereo..." size="w-[380px]" />
        <div className="-mb-[3px] ml-[13px] w-[14px] shrink-0 self-stretch border-x-[3px] border-[#9f9eb0]" />
      </section>

      <section aria-label="Timeline" className="relative h-[94px] shrink-0 border-t-[3px] border-b-[3px] border-t-white border-b-[#9f9eb0] bg-[#e3e3e3]">
        <div className="absolute top-0 left-[85.2%] h-full w-[71px] bg-[#a3a2b8]" />
        <ol className="relative -mx-[143px] grid h-full grid-cols-10">
          {RULER.map((t) => (
            <li key={t} className="flex flex-col justify-end text-center">
              <span className={`text-[43px] leading-[48px] font-semibold ${t === "2:1" ? "pr-6" : ""}`}>{t}</span>
              <span className="mt-[2px] grid grid-cols-3 items-end justify-items-center">
                <i className="h-[11px] w-[3px] bg-black" />
                <i className="h-[18px] w-[4px] bg-black" />
                <i className="h-[11px] w-[3px] bg-black" />
              </span>
            </li>
          ))}
        </ol>
        <svg width="26" height="46" viewBox="0 0 26 46" className="absolute bottom-0 left-[76px]" aria-hidden="true">
          <path d="M24 3V43L3 23Z" fill="#cfcfcf" stroke="#9a9a9a" strokeWidth="3" />
          <path d="M2 0V46M24 0V46" stroke="#8f8f8f" strokeWidth="3" />
        </svg>
        <svg width="46" height="35" viewBox="0 0 46 35" className="absolute top-0 left-[2359px]" aria-hidden="true">
          <path d="M1 1H45L25 33H21Z" fill="#14b643" stroke="#3a7a45" strokeWidth="3" />
        </svg>
      </section>
      <div className="h-[22px] shrink-0 border-y-[4px] border-black bg-[#a09fb1]" />

      <section aria-label="Tracks" className="flex flex-col">
        <Channel
          label="Music, left channel"
          height={494}
          mid={247}
          size="h-[494px]"
          clip={[48, 2925]}
          envelope={fadeEnvelope(247, 85, 131, 166)}
          waves={musicL}
          ticks={[125, 368]}
          zero={6}
        />
        <Divider />
        <Channel
          label="Music, right channel"
          height={516}
          mid={258}
          size="h-[516px]"
          clip={[48, 2925]}
          envelope={fadeEnvelope(258, 88, 137, 172)}
          waves={musicR}
          ticks={[128, 387, 514]}
          zero={6}
        />
        <Divider heavy />
        <Channel
          label="Voice, left channel"
          height={505}
          mid={252}
          size="h-[505px]"
          clip={[112, 2818]}
          envelope="M110 0H2820V505H110Z"
          waves={voiceL}
          ticks={[128, 378, 503]}
          zero={4}
        />
        <Divider />
        <Channel
          label="Voice, right channel"
          height={498}
          mid={251}
          size="h-[498px]"
          clip={[112, 2818]}
          envelope="M110 0H2820V498H110Z"
          waves={voiceR}
          ticks={[129, 380]}
          zero={4}
        />
      </section>

      <div className="ml-[13px] h-[56px] shrink-0 border-y-[3px] border-[#ececec] bg-[#fbfbfb] pt-[14px]">
        <div className="mr-[302px] ml-[3px] h-[28px] rounded-full bg-[#c1c1c1]" />
      </div>

      <section
        aria-label="Selection"
        className="flex h-[201px] shrink-0 border-t-[3px] border-b-[3px] border-[#9f9eb0] pt-[21px] font-[Inter,sans-serif] text-[45px] leading-[56px]"
      >
        <label className="mt-[72px] flex h-[77px] w-[268px] shrink-0 items-center pl-[5px]">
          <input
            type="checkbox"
            className="mr-[14px] h-[50px] w-[49px] shrink-0 appearance-none rounded-[8px] border-[3px] border-[#b9b9b9] bg-white"
          />
          Snap To
        </label>
        <div className="flex flex-col gap-[16px]">
          <span>Selection Start:</span>
          <TimeField label="Selection start" minutes="01" seconds="55.694" />
        </div>
        <div className="ml-[21px] flex flex-col gap-[16px]">
          <div className="flex h-[56px] items-center pl-[3px]">
            <label className="flex items-center">
              <input
                type="radio"
                name="span"
                defaultChecked
                className="mr-[12px] h-[56px] w-[56px] appearance-none rounded-full border-[19px] border-[#3b99fc] bg-white"
              />
              End
            </label>
            <label className="ml-[24px] flex items-center">
              <input
                type="radio"
                name="span"
                className="mr-[12px] h-[56px] w-[56px] appearance-none rounded-full border-[3px] border-[#b9b9b9] bg-white"
              />
              Length
            </label>
          </div>
          <TimeField label="Selection end" minutes="01" seconds="58.916" />
        </div>
        <div className="mt-[61px] ml-[21px] h-[96px] w-[3px] bg-[#999999]" />
        <div className="ml-[23px] flex flex-col gap-[16px]">
          <span>Audio Position:</span>
          <TimeField label="Audio position" minutes="01" seconds="47.857" />
        </div>
      </section>

      <footer className="flex flex-1 justify-between border-t-[4px] border-white text-[41px] leading-[46px] shadow-[inset_0_3px_0_#f4f4f4]">
        <span>a track in time</span>
        <span>Actual Rate: 22</span>
      </footer>
    </main>
  );
}
